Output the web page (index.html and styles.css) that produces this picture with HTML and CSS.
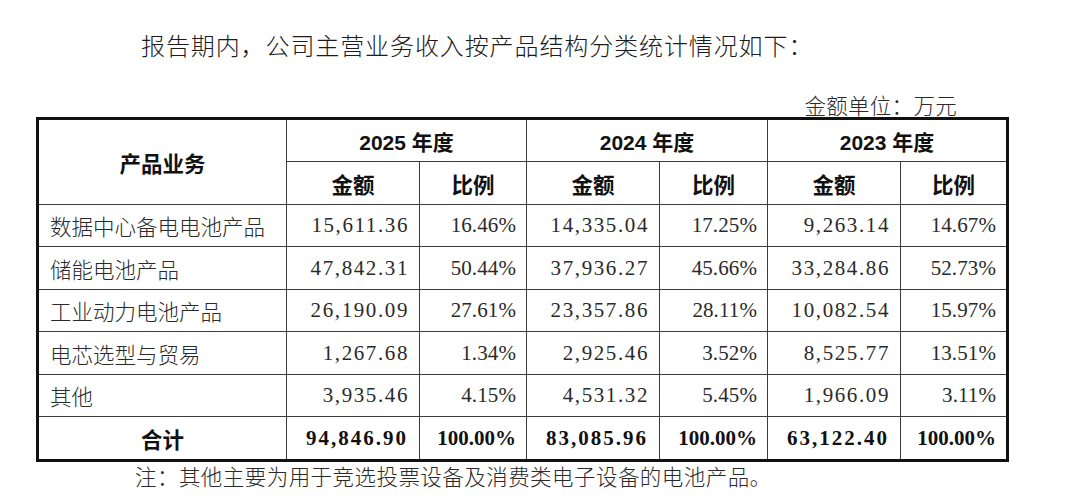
FILE: index.html
```html
<!DOCTYPE html>
<html lang="zh-CN">
<head>
<meta charset="utf-8">
<title>主营业务收入按产品结构分类</title>
<link rel="stylesheet" href="styles.css">
</head>
<body>
<div class="page">
  <p class="intro">报告期内，公司主营业务收入按产品结构分类统计情况如下：</p>
  <p class="unit">金额单位：万元</p>
  <div class="grid">
    <div class="cell head rowspan">产品业务</div>
    <div class="cell head year span2">2025 年度</div>
    <div class="cell head year span2">2024 年度</div>
    <div class="cell head year span2 last">2023 年度</div>
    <div class="cell head">金额</div>
    <div class="cell head">比例</div>
    <div class="cell head">金额</div>
    <div class="cell head">比例</div>
    <div class="cell head">金额</div>
    <div class="cell head last">比例</div>

    <div class="cell name">数据中心备电电池产品</div>
    <div class="cell num amt">15,611.36</div>
    <div class="cell num pct">16.46%</div>
    <div class="cell num amt">14,335.04</div>
    <div class="cell num pct">17.25%</div>
    <div class="cell num amt">9,263.14</div>
    <div class="cell num pct last">14.67%</div>

    <div class="cell name">储能电池产品</div>
    <div class="cell num amt">47,842.31</div>
    <div class="cell num pct">50.44%</div>
    <div class="cell num amt">37,936.27</div>
    <div class="cell num pct">45.66%</div>
    <div class="cell num amt">33,284.86</div>
    <div class="cell num pct last">52.73%</div>

    <div class="cell name">工业动力电池产品</div>
    <div class="cell num amt">26,190.09</div>
    <div class="cell num pct">27.61%</div>
    <div class="cell num amt">23,357.86</div>
    <div class="cell num pct">28.11%</div>
    <div class="cell num amt">10,082.54</div>
    <div class="cell num pct last">15.97%</div>

    <div class="cell name">电芯选型与贸易</div>
    <div class="cell num amt">1,267.68</div>
    <div class="cell num pct">1.34%</div>
    <div class="cell num amt">2,925.46</div>
    <div class="cell num pct">3.52%</div>
    <div class="cell num amt">8,525.77</div>
    <div class="cell num pct last">13.51%</div>

    <div class="cell name">其他</div>
    <div class="cell num amt">3,935.46</div>
    <div class="cell num pct">4.15%</div>
    <div class="cell num amt">4,531.32</div>
    <div class="cell num pct">5.45%</div>
    <div class="cell num amt">1,966.09</div>
    <div class="cell num pct last">3.11%</div>

    <div class="cell head total bottom">合计</div>
    <div class="cell num amt total bottom">94,846.90</div>
    <div class="cell num pct total bottom">100.00%</div>
    <div class="cell num amt total bottom">83,085.96</div>
    <div class="cell num pct total bottom">100.00%</div>
    <div class="cell num amt total bottom">63,122.40</div>
    <div class="cell num pct total bottom last">100.00%</div>
  </div>
  <p class="note">注：其他主要为用于竞选投票设备及消费类电子设备的电池产品。</p>
</div>
</body>
</html>
```

FILE: styles.css
```css
html, body {
  margin: 0;
  padding: 0;
  background: #ffffff;
}

.page {
  width: 1080px;
  height: 498px;
  overflow: hidden;
  font-family: "Noto Sans CJK SC", sans-serif;
  color: #222222;
}

.intro {
  margin: 30px 0 0 0;
  padding-left: 141px;
  font-size: 24px;
  line-height: 30px;
  letter-spacing: 0.9px;
  font-weight: 300;
  color: #1c1c1c;
}

.unit {
  margin: 33px 0 0 0;
  padding-right: 123px;
  text-align: right;
  font-size: 21.5px;
  line-height: 24px;
  letter-spacing: 0.3px;
  font-weight: 300;
  color: #2a2a2a;
}

.grid {
  box-sizing: border-box;
  margin-left: 36px;
  width: 973px;
  border: 3px solid #111111;
  display: grid;
  grid-template-columns: 248px 133px 107px 133px 108px 133px 105px;
  grid-template-rows: 42px 43px 42px 43px 42px 43px 42px 42px;
}

.cell {
  box-sizing: border-box;
  border-right: 1px solid #3c3c3c;
  border-bottom: 1px solid #3c3c3c;
  display: flex;
  align-items: center;
  font-size: 21.5px;
  white-space: nowrap;
}

.cell.last {
  border-right: none;
}

.cell.bottom {
  border-bottom: none;
}

.head {
  justify-content: center;
  font-weight: 700;
  color: #111111;
}

.rowspan {
  grid-row: span 2;
}

.span2 {
  grid-column: span 2;
}

.year {
  font-family: "Liberation Sans", "Noto Sans CJK SC", sans-serif;
  font-size: 21px;
}

.name {
  padding-left: 11px;
  font-weight: 300;
  color: #2a2a2a;
}

.num {
  justify-content: flex-end;
  font-family: "Liberation Serif", "Noto Sans CJK SC", serif;
  font-size: 21px;
  color: #2a2a2a;
}

.amt {
  padding-right: 10px;
  letter-spacing: 1.6px;
}

.pct {
  padding-right: 10px;
  letter-spacing: 0.1px;
}

.num.total {
  font-weight: 700;
  color: #111111;
}

.amt.total {
  padding-right: 11px;
  letter-spacing: 2px;
}

.pct.total {
  letter-spacing: 0;
}

.head.total {
  font-size: 21.5px;
}

.note {
  margin: 0;
  padding-left: 135px;
  font-size: 21.5px;
  line-height: 28px;
  letter-spacing: 0.45px;
  font-weight: 300;
  color: #2a2a2a;
}
```
